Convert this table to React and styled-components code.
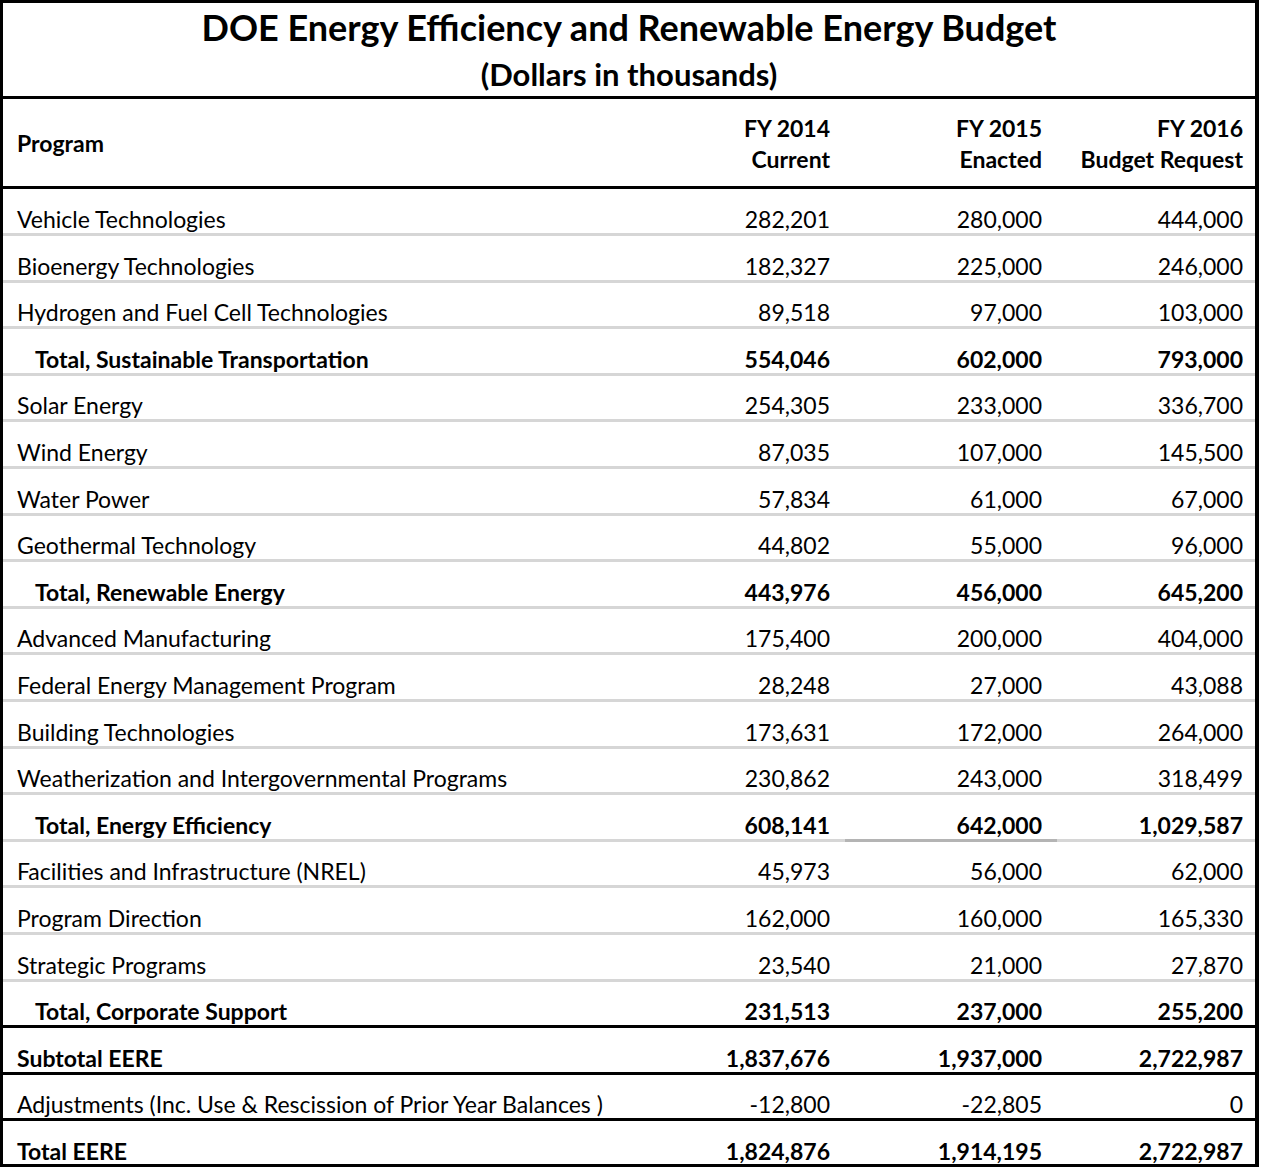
import styled, { createGlobalStyle } from 'styled-components';

const GlobalStyle = createGlobalStyle`
    html, body {
        margin: 0;
        padding: 0;
        background: #ffffff;
    }
    body {
        font-family: Lato, "Liberation Sans", Arial, sans-serif;
        color: #000000;
    }
`

const Sheet = styled.div`
    width: 1259px;
    box-sizing: border-box;
    border: 3px solid #000;
    border-right-width: 4px;
`

const TitleBlock = styled.div`
    height: 96px;
    box-sizing: border-box;
    border-bottom: 3px solid #000;
    text-align: center;
    font-weight: 700;
`

const Title = styled.div`
    font-size: 36px;
    line-height: 48px;
`

const Subtitle = styled.div`
    font-size: 31px;
    line-height: 46px;
`

const cols = '627px 215px 212px 1fr';

const HeadRow = styled.div`
    display: grid;
    grid-template-columns: ${cols};
    height: 90px;
    box-sizing: border-box;
    border-bottom: 3px solid #000;
    font-size: 23px;
    font-weight: 700;
`

const HeadCell = styled.div`
    display: flex;
    flex-direction: column;
    justify-content: center;
    align-items: ${p => (p.$num ? 'flex-end' : 'flex-start')};
    padding: 2px ${p => p.$pr || 0}px 0 ${p => p.$pl || 0}px;
    line-height: 31px;
    text-align: right;
`

const Row = styled.div`
    display: grid;
    grid-template-columns: ${cols};
    height: ${p => (p.$last ? '43.6px' : '46.6px')};
    font-size: 23px;
    font-weight: ${p => (p.$bold ? 700 : 400)};
`

const Cell = styled.div`
    display: flex;
    align-items: center;
    justify-content: ${p => (p.$num ? 'flex-end' : 'flex-start')};
    box-sizing: border-box;
    padding: 16px ${p => p.$pr || 0}px 0 ${p => p.$pl || 0}px;
    border-bottom: ${p => (p.$line === 'none' ? '0' : `3px solid ${p.$line}`)};
    white-space: nowrap;
`

const rows = [
    { name: 'Vehicle Technologies', v: ['282,201', '280,000', '444,000'] },
    { name: 'Bioenergy Technologies', v: ['182,327', '225,000', '246,000'] },
    { name: 'Hydrogen and Fuel Cell Technologies', v: ['89,518', '97,000', '103,000'] },
    { name: 'Total, Sustainable Transportation', v: ['554,046', '602,000', '793,000'], total: true },
    { name: 'Solar Energy', v: ['254,305', '233,000', '336,700'] },
    { name: 'Wind Energy', v: ['87,035', '107,000', '145,500'] },
    { name: 'Water Power', v: ['57,834', '61,000', '67,000'] },
    { name: 'Geothermal Technology', v: ['44,802', '55,000', '96,000'] },
    { name: 'Total, Renewable Energy', v: ['443,976', '456,000', '645,200'], total: true },
    { name: 'Advanced Manufacturing', v: ['175,400', '200,000', '404,000'] },
    { name: 'Federal Energy Management Program', v: ['28,248', '27,000', '43,088'] },
    { name: 'Building Technologies', v: ['173,631', '172,000', '264,000'] },
    { name: 'Weatherization and Intergovernmental Programs', v: ['230,862', '243,000', '318,499'] },
    { name: 'Total, Energy Efficiency', v: ['608,141', '642,000', '1,029,587'], total: true, mark: 1 },
    { name: 'Facilities and Infrastructure (NREL)', v: ['45,973', '56,000', '62,000'] },
    { name: 'Program Direction', v: ['162,000', '160,000', '165,330'] },
    { name: 'Strategic Programs', v: ['23,540', '21,000', '27,870'] },
    { name: 'Total, Corporate Support', v: ['231,513', '237,000', '255,200'], total: true, line: '#000' },
    { name: 'Subtotal EERE', v: ['1,837,676', '1,937,000', '2,722,987'], bold: true, line: '#000' },
    { name: 'Adjustments (Inc. Use & Rescission of Prior Year Balances )', v: ['-12,800', '-22,805', '0'], line: '#000' },
    { name: 'Total EERE', v: ['1,824,876', '1,914,195', '2,722,987'], bold: true, line: 'none', last: true },
]

const pads = [15, 15, 12];

export default function App() {
    return (
        <>
            <GlobalStyle />
            <Sheet>
                <TitleBlock>
                    <Title>DOE Energy Efficiency and Renewable Energy Budget</Title>
                    <Subtitle>(Dollars in thousands)</Subtitle>
                </TitleBlock>
                <HeadRow>
                    <HeadCell $pl={14}>Program</HeadCell>
                    <HeadCell $num $pr={15}><span>FY 2014</span><span>Current</span></HeadCell>
                    <HeadCell $num $pr={15}><span>FY 2015</span><span>Enacted</span></HeadCell>
                    <HeadCell $num $pr={12}><span>FY 2016</span><span>Budget Request</span></HeadCell>
                </HeadRow>
                {rows.map(r => {
                    const line = r.line || '#d6d6d6';
                    return (
                        <Row key={r.name} $bold={r.bold || r.total} $last={r.last}>
                            <Cell $pl={r.total ? 32 : 14} $line={line}>{r.name}</Cell>
                            {r.v.map((val, i) => (
                                <Cell key={i} $num $pr={pads[i]} $line={r.mark === i ? '#b4b4b4' : line}>{val}</Cell>
                            ))}
                        </Row>
                    )
                })}
            </Sheet>
        </>
    )
}
